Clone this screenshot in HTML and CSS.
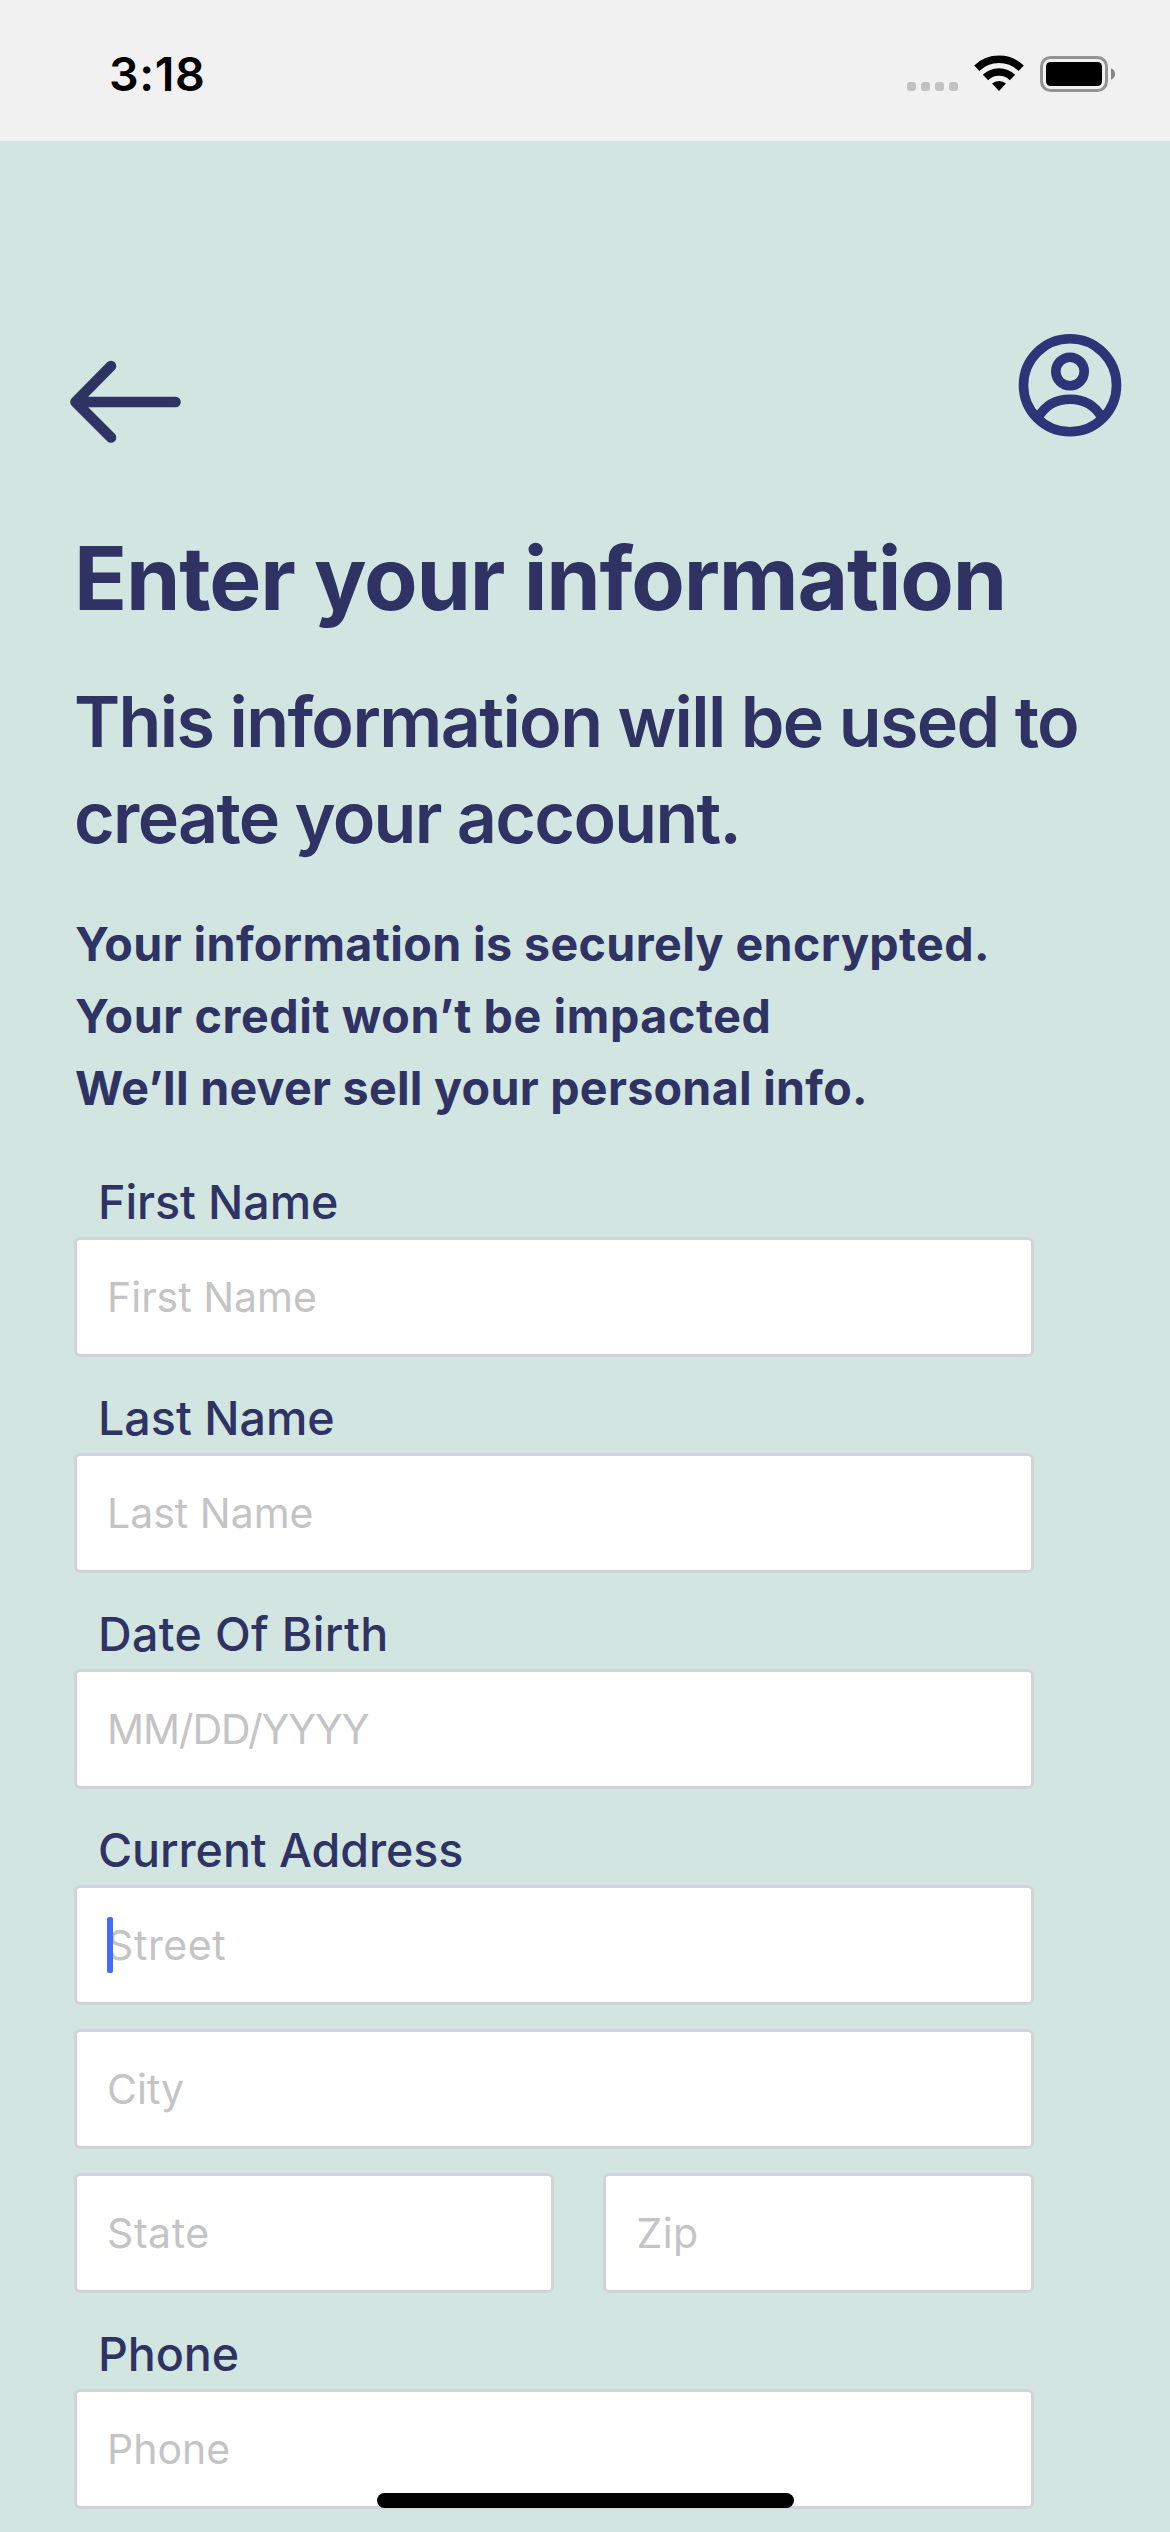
FILE: index.html
```
<!DOCTYPE html>
<html lang="en">
<head>
<meta charset="utf-8">
<title>Enter your information</title>
<link rel="stylesheet" href="styles.css">
</head>
<body>
<div class="screen">
  <header class="status-bar">
    <span class="clock">3:18</span>
    <svg class="status-icons" width="210" height="40" viewBox="906 54 210 40" aria-hidden="true">
      <g fill="#c2c2c2">
        <rect x="907" y="82" width="9" height="9" rx="3"/>
        <rect x="921" y="82" width="9" height="9" rx="3"/>
        <rect x="935" y="82" width="9" height="9" rx="3"/>
        <rect x="949" y="82" width="9" height="9" rx="3"/>
      </g>
      <g fill="none" stroke="#000" stroke-width="7.6">
        <path d="M976.8 68.2A32.2 32.2 0 0 1 1021.2 68.2"/>
        <path d="M985.5 77.5A19.2 19.2 0 0 1 1012.5 77.5"/>
      </g>
      <path d="M999 91L992 83.6A10.6 10.6 0 0 1 1006 83.6Z"/>
      <rect x="1041.5" y="57.5" width="65" height="33" rx="9" fill="none" stroke="#939393" stroke-width="3"/>
      <rect x="1046" y="62" width="56" height="24" rx="4.5"/>
      <path d="M1111 68.2C1113.6 69.2 1115 71.3 1115 74S1113.6 78.800 1111 79.800Z" fill="#868686"/>
    </svg>
  </header>

  <nav class="top-nav">
    <svg class="back" width="116" height="84" viewBox="68 360 116 84" aria-label="Back">
      <path d="M111 366L75.500 402L111 437.500M75.500 402H175.500" fill="none" stroke="#2e3364" stroke-width="10.600" stroke-linecap="round" stroke-linejoin="round"/>
    </svg>
    <svg class="account" width="104" height="104" viewBox="1018 333 104 104" aria-label="Account">
      <g fill="none" stroke="#2e3478" stroke-width="9.600">
        <circle cx="1070" cy="385.300" r="46.500"/>
        <circle cx="1070" cy="371.500" r="14.200"/>
        <path d="M1038.500 417Q1049 399.300 1070 399.300T1101.500 417"/>
      </g>
    </svg>
  </nav>

  <main class="content">
    <h1 class="title">Enter your information</h1>
    <h2 class="subtitle"><span class="sub-a">This information will be used to</span><br><span class="sub-b">create your account.</span></h2>
    <p class="notes"><span class="note-a">Your information is securely encrypted.</span><br><span class="note-b">Your credit won’t be impacted</span><br><span class="note-c">We’ll never sell your personal info.</span></p>

    <form class="form">
      <section class="group">
        <div class="label">First Name</div>
        <div class="field">First Name</div>
      </section>
      <section class="group">
        <div class="label last-label">Last Name</div>
        <div class="field">Last Name</div>
      </section>
      <section class="group">
        <div class="label birth-label">Date Of Birth</div>
        <div class="field date">MM/DD/YYYY</div>
      </section>
      <section class="group">
        <div class="label">Current Address</div>
        <div class="stack">
          <div class="field street">Street<i class="caret"></i></div>
          <div class="field">City</div>
          <div class="row">
            <div class="field state">State</div>
            <div class="field zip">Zip</div>
          </div>
        </div>
      </section>
      <section class="group">
        <div class="label">Phone</div>
        <div class="field">Phone</div>
      </section>
    </form>
  </main>
  <div class="home-bar"></div>
</div>
</body>
</html>
```
FILE: styles.css
```
* { box-sizing: border-box; margin: 0; padding: 0; }

body {
  width: 1170px;
  height: 2532px;
  background: #d2e5e0;
  color: #2f3364;
  font-family: Inter, "Liberation Sans", sans-serif;
}

.screen {
  position: relative;
  width: 1170px;
  height: 2532px;
  overflow: hidden;
}

.status-bar {
  display: flex;
  justify-content: space-between;
  align-items: flex-start;
  height: 141px;
  padding: 54px 54px 0 109px;
  background: #f1f1f1;
}

.clock {
  margin-top: -10px;
  color: #000;
  font-size: 46.6px;
  font-weight: 600;
  line-height: 60px;
  letter-spacing: 0.6px;
}

.status-icons { display: block; }

.top-nav {
  display: flex;
  justify-content: space-between;
  align-items: flex-start;
  height: 383px;
  padding: 192px 48px 0 68px;
}

.back { margin-top: 27px; }

.content { padding: 0 0 0 74px; }

.title {
  font-size: 87.5px;
  font-weight: 700;
  line-height: 108px;
  letter-spacing: -1.2px;
  white-space: nowrap;
}

.subtitle {
  margin-top: 42px;
  font-size: 70px;
  font-weight: 600;
  line-height: 96px;
  white-space: nowrap;
}

.sub-a { letter-spacing: -1.6px; }
.sub-b { letter-spacing: -1.7px; }

.notes {
  margin-top: 42px;
  padding-left: 1px;
  font-size: 46.6px;
  font-weight: 700;
  line-height: 72px;
  white-space: nowrap;
}

.note-a { letter-spacing: 0.385px; }
.note-b { letter-spacing: 0.594px; }
.note-c { letter-spacing: 0.272px; }

.form {
  display: flex;
  flex-direction: column;
  gap: 31px;
  width: 959.5px;
  margin-top: 48px;
}

.group {
  display: flex;
  flex-direction: column;
  gap: 5px;
}

.label {
  padding-left: 24px;
  font-size: 46.6px;
  font-weight: 500;
  line-height: 60px;
  letter-spacing: -0.08px;
}

.last-label { letter-spacing: 0; }
.birth-label { letter-spacing: 0.337px; }

.field {
  display: flex;
  align-items: center;
  height: 120px;
  padding-left: 30px;
  border: 3px solid #d1d3db;
  border-radius: 6px;
  background: #fff;
  color: #c4c4c6;
  font-size: 41px;
  font-weight: 400;
  line-height: 50px;
}

.date { letter-spacing: -1.1px; }

.street, .state { letter-spacing: 0.6px; }

.street { position: relative; }

.caret {
  position: absolute;
  left: 30px;
  top: 29px;
  width: 6px;
  height: 56px;
  border-radius: 2px;
  background: #416df7;
}

.stack {
  display: flex;
  flex-direction: column;
  gap: 24px;
}

.row {
  display: grid;
  grid-template-columns: 480px 431px;
  column-gap: 48.5px;
}

.zip { padding-left: 31px; letter-spacing: 0.39px; }

.home-bar {
  position: absolute;
  left: 377px;
  top: 2493px;
  width: 417px;
  height: 15px;
  border-radius: 8px;
  background: #000;
}
```
